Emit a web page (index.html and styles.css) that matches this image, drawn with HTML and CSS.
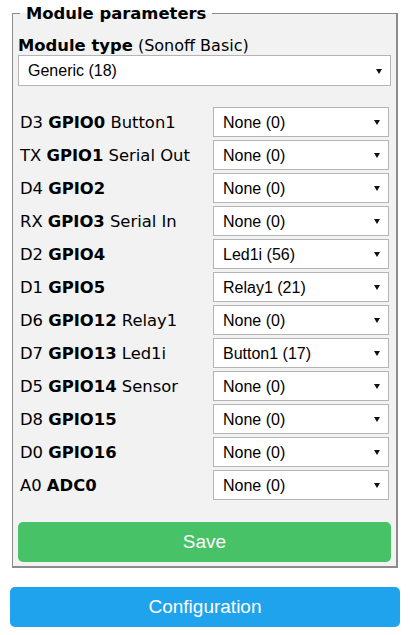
FILE: index.html
```html
<!DOCTYPE html>
<html>
<head>
<meta charset="utf-8">
<link rel="stylesheet" href="styles.css">
</head>
<body>
<div class="page">
  <fieldset class="box">
    <legend class="box-title">Module parameters</legend>
    <div class="modtype"><b>Module type</b> (Sonoff Basic)</div>
    <div class="sel sel-wide"><select><option>Generic (18)</option></select></div>
    <div class="rows">
      <div class="lbl">D3 <b>GPIO0</b> Button1</div><div class="sel"><select><option>None (0)</option></select></div>
      <div class="lbl">TX <b>GPIO1</b> Serial Out</div><div class="sel"><select><option>None (0)</option></select></div>
      <div class="lbl">D4 <b>GPIO2</b></div><div class="sel"><select><option>None (0)</option></select></div>
      <div class="lbl">RX <b>GPIO3</b> Serial In</div><div class="sel"><select><option>None (0)</option></select></div>
      <div class="lbl">D2 <b>GPIO4</b></div><div class="sel"><select><option>Led1i (56)</option></select></div>
      <div class="lbl">D1 <b>GPIO5</b></div><div class="sel"><select><option>Relay1 (21)</option></select></div>
      <div class="lbl">D6 <b>GPIO12</b> Relay1</div><div class="sel"><select><option>None (0)</option></select></div>
      <div class="lbl">D7 <b>GPIO13</b> Led1i</div><div class="sel"><select><option>Button1 (17)</option></select></div>
      <div class="lbl">D5 <b>GPIO14</b> Sensor</div><div class="sel"><select><option>None (0)</option></select></div>
      <div class="lbl">D8 <b>GPIO15</b></div><div class="sel"><select><option>None (0)</option></select></div>
      <div class="lbl">D0 <b>GPIO16</b></div><div class="sel"><select><option>None (0)</option></select></div>
      <div class="lbl">A0 <b>ADC0</b></div><div class="sel"><select><option>None (0)</option></select></div>
    </div>
    <button class="btn btn-save">Save</button>
  </fieldset>
  <button class="btn btn-conf">Configuration</button>
</div>
</body>
</html>
```

FILE: styles.css
```css
html, body {
  margin: 0;
  padding: 0;
  background: #fff;
}
.page {
  padding: 4px 10px 0 10px;
  font-family: "DejaVu Sans", Verdana, sans-serif;
  font-size: 16px;
  color: #000;
}
.box {
  margin: 0 2px;
  padding: 0 5px 4px 5px;
  border-style: solid;
  border-width: 1px 2px 2px 1px;
  border-color: #8c8c8c;
  background: #f2f2f2;
  min-width: 0;
}
.box-title {
  font-weight: bold;
  padding: 0 6px;
  margin-left: 2px;
  line-height: 19px;
  font-size: 16.4px;
}
.modtype {
  margin-top: 13px;
  line-height: 19px;
  font-size: 16px;
}
.modtype b { font-size: 16.4px; }
.sel {
  position: relative;
}
.sel select {
  -webkit-appearance: none;
  appearance: none;
  width: 100%;
  box-sizing: border-box;
  height: 30px;
  margin: 0;
  padding: 0 0 0 9px;
  border: 1px solid #b4b4b4;
  border-radius: 0;
  background: #fff;
  font-family: "Liberation Sans", Arial, sans-serif;
  font-size: 16px;
  color: #000;
  display: block;
}
.sel::after {
  content: "";
  position: absolute;
  right: 9px;
  top: 50%;
  margin-top: -2px;
  border-left: 3px solid transparent;
  border-right: 3px solid transparent;
  border-top: 5px solid #111;
  pointer-events: none;
}
.sel-wide select { height: 31px; }
.rows {
  margin-top: 21px;
  display: grid;
  grid-template-columns: 1fr 176px;
  row-gap: 3px;
  padding: 0 2px;
  align-items: center;
}
.lbl {
  line-height: 19px;
  white-space: nowrap;
  font-size: 16.4px;
}
.btn {
  display: block;
  width: 100%;
  border: 0;
  border-radius: 5px;
  color: #fff;
  font-family: "Liberation Sans", Arial, sans-serif;
  font-size: 19px;
  height: 40px;
  padding: 0;
  margin: 0;
}
.btn-save {
  background: #47c266;
  margin-top: 22px;
}
.btn-conf {
  background: #1fa3ec;
  margin-top: 19px;
}
```
